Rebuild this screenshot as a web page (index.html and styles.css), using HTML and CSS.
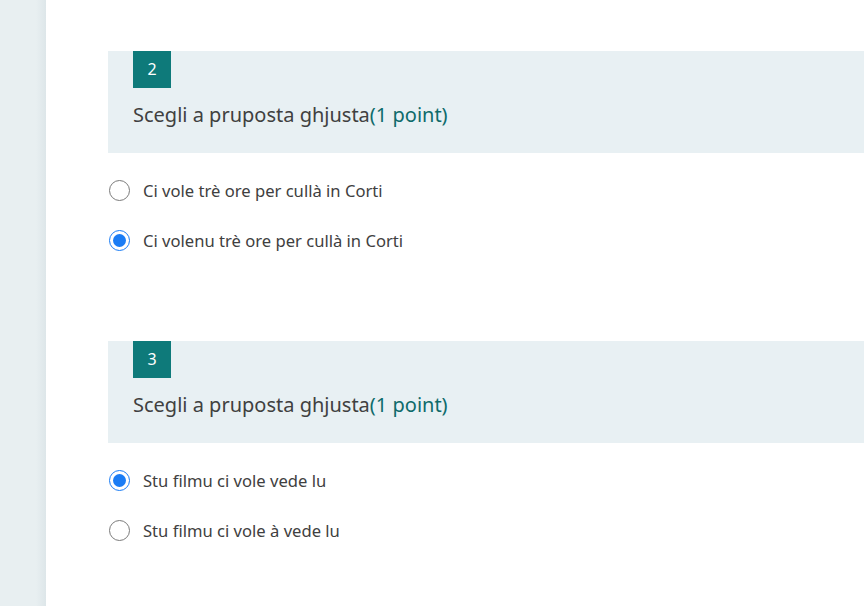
FILE: index.html
```html
<!DOCTYPE html>
<html lang="co">
<head>
<meta charset="utf-8">
<link rel="stylesheet" href="styles.css">
</head>
<body>
<div class="page">
  <aside class="side"></aside>
  <main class="form">
    <section class="question">
      <div class="q-head">
        <div class="badge">2</div>
        <div class="q-title">Scegli a pruposta ghjusta<span class="pts">(1 point)</span></div>
      </div>
      <div class="options">
        <label class="opt"><span class="radio"></span><span class="opt-text">Ci vole trè ore per cullà in Corti</span></label>
        <label class="opt"><span class="radio on"></span><span class="opt-text">Ci volenu trè ore per cullà in Corti</span></label>
      </div>
    </section>
    <section class="question">
      <div class="q-head">
        <div class="badge">3</div>
        <div class="q-title">Scegli a pruposta ghjusta<span class="pts">(1 point)</span></div>
      </div>
      <div class="options">
        <label class="opt"><span class="radio on"></span><span class="opt-text">Stu filmu ci vole vede lu</span></label>
        <label class="opt"><span class="radio"></span><span class="opt-text">Stu filmu ci vole à vede lu</span></label>
      </div>
    </section>
  </main>
</div>
</body>
</html>
```
FILE: styles.css
```css
html, body {
  margin: 0;
  padding: 0;
  height: 100%;
  overflow: hidden;
}
body {
  font-family: "Noto Sans", "Open Sans", sans-serif;
  color: #323130;
  background: #e8eff1;
}
.page {
  display: flex;
  height: 606px;
}
.side {
  width: 46px;
  flex: none;
  background: linear-gradient(to right, #e8eff1 0, #e8eff1 36px, #dde6e9 46px);
}
.form {
  flex: 1;
  background: #ffffff;
  padding: 51px 0 0 62px;
}
.question {
  margin-bottom: 89px;
}
.q-head {
  background: #e8f0f3;
  padding: 0 0 24px 25px;
}
.badge {
  width: 38px;
  height: 37px;
  background: #0e7a7a;
  color: #ffffff;
  font-size: 16px;
  line-height: 37px;
  text-align: center;
}
.q-title {
  margin-top: 13px;
  font-size: 20px;
  line-height: 28px;
  color: #404040;
}
.pts {
  color: #0e6b6b;
}
.options {
  padding-top: 25px;
  display: flex;
  flex-direction: column;
  gap: 26px;
}
.opt {
  display: flex;
  align-items: center;
  height: 24px;
  font-size: 16.6px;
  color: #404040;
}
.radio {
  width: 19px;
  height: 19px;
  border: 1.5px solid #7a7a7a;
  border-radius: 50%;
  margin-left: 1px;
  margin-right: 13px;
  flex: none;
  box-sizing: content-box;
  position: relative;
}
.radio.on {
  border-color: #1a7cf5;
}
.radio.on::after {
  content: "";
  position: absolute;
  left: 3px;
  top: 3px;
  width: 13px;
  height: 13px;
  border-radius: 50%;
  background: #1a7cf5;
}
```
